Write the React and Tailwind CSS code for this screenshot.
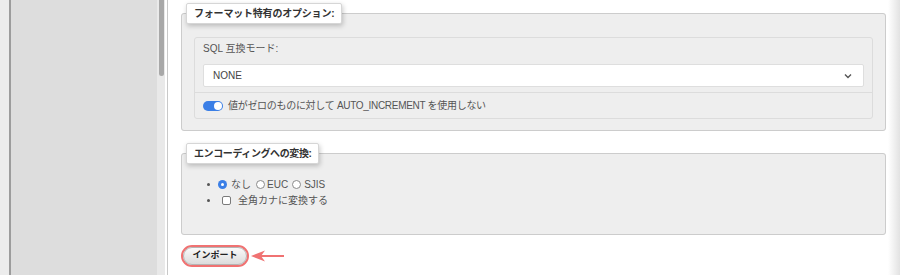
import React from "react";

const FONT = { fontFamily: "'Liberation Sans','Noto Sans CJK JP',sans-serif" };

function Radio({ checked }) {
  return checked ? (
    <span className="flex h-[9px] w-[9px] shrink-0 items-center justify-center rounded-full bg-[#3b7fe6]">
      <span className="block h-[3px] w-[3px] rounded-full bg-white" />
    </span>
  ) : (
    <span className="block h-[9px] w-[9px] shrink-0 rounded-full border border-[#8a8a8a] bg-white" />
  );
}

function Bullet() {
  return <span className="block h-[3px] w-[3px] shrink-0 rounded-full bg-[#555]" />;
}

export default function App() {
  return (
    <div
      className="flex h-[275px] w-[900px] overflow-hidden bg-white text-[10px] text-[#555]"
      style={FONT}
    >
      {/* left sidebar */}
      <div className="w-[9px] bg-[#ececec]" />
      <div className="w-[2px] bg-[#9c9c9c]" />
      <div className="w-[146px] bg-[#dddddd]" />
      <div className="w-[8px] bg-[#e9e9e9] pl-[2px]">
        <div className="h-[76px] w-[5px] rounded-b-[3px] bg-[#a8a8a8]" />
      </div>
      <div className="w-[2px] bg-white" />
      <div className="w-[1px] bg-[#c9c9c9]" />

      {/* main */}
      <main className="flex w-[720px] flex-col pl-[13px] pt-[3px]">
        <fieldset className="w-[705px] rounded-[3px] border border-[#cccccc] bg-[#eeeeee] px-[4px] pb-[11px] pt-[13px]">
          <legend className="rounded-[2px] border border-[#d6d6d6] bg-white px-[7px] text-[10px] font-bold leading-[19px] tracking-[-0.2px] text-[#333] shadow-[1px_2px_5px_rgba(0,0,0,0.22)]">
            フォーマット特有のオプション:
          </legend>
          <div className="mx-[8px] rounded-[3px] border border-[#dcdcdc] bg-[#eeeeee]">
            <div className="border-b border-[#dcdcdc] px-[8px] pb-[5px] pt-[3px]">
              <div className="mb-[7px] h-[16px] leading-[16px]">SQL 互換モード:</div>
              <div className="flex h-[23px] items-center justify-between rounded-[2px] border border-[#dedede] bg-white pl-[9px] pr-[11px] text-[#444]">
                <span>NONE</span>
                <svg width="8" height="6" viewBox="0 0 8 6">
                  <polyline
                    points="1,1.5 4,4.5 7,1.5"
                    fill="none"
                    stroke="#555"
                    strokeWidth="1.4"
                  />
                </svg>
              </div>
            </div>
            <div className="flex h-[25px] items-center gap-[5px] px-[8px]">
              <span className="flex h-[10px] w-[20px] items-center justify-end rounded-full bg-[#3b7fe6] pr-[1px]">
                <span className="block h-[8px] w-[8px] rounded-full bg-white" />
              </span>
              <span className="tracking-[-0.3px]">値がゼロのものに対して AUTO_INCREMENT を使用しない</span>
            </div>
          </div>
        </fieldset>

        <fieldset className="mt-[12px] w-[705px] rounded-[3px] border border-[#cccccc] bg-[#eeeeee] px-[4px] pb-[26px] pt-[12px]">
          <legend className="rounded-[2px] border border-[#d6d6d6] bg-white px-[7px] text-[10px] font-bold leading-[19px] tracking-[-0.4px] text-[#333] shadow-[1px_2px_5px_rgba(0,0,0,0.22)]">
            エンコーディングへの変換:
          </legend>
          <div className="flex flex-col pl-[21px]">
            <div className="flex h-[16px] items-center">
              <Bullet />
              <span className="ml-[8px] flex">
                <Radio checked />
              </span>
              <span className="ml-[4px]">なし</span>
              <span className="ml-[5px] flex">
                <Radio />
              </span>
              <span className="ml-[2px]">EUC</span>
              <span className="ml-[4px] flex">
                <Radio />
              </span>
              <span className="ml-[3px]">SJIS</span>
            </div>
            <div className="flex h-[16px] items-center">
              <Bullet />
              <span className="ml-[12px] block h-[9px] w-[9px] shrink-0 rounded-[2px] border border-[#7a7a7a] bg-white" />
              <span className="ml-[7px]">全角カナに変換する</span>
            </div>
          </div>
        </fieldset>

        <div className="mt-[10px] flex items-center">
          <div className="flex h-[22px] w-[68px] rounded-full border-[2px] border-[#f07272]">
            <button className="flex flex-1 items-center justify-center rounded-full border border-[#b5b5b5] bg-gradient-to-b from-[#fafafa] to-[#dcdcdc] text-[9px] font-bold text-[#222]">
              インポート
            </button>
          </div>
          <svg className="ml-[2px]" width="34" height="12" viewBox="0 0 34 12">
            <path d="M0 6 L14 0.5 L10 6 L14 11.5 Z" fill="#f07272" />
            <line x1="10" y1="6" x2="33" y2="6" stroke="#f07272" strokeWidth="2" />
          </svg>
        </div>
      </main>

      {/* right edge shadow */}
      <div className="w-[12px] bg-gradient-to-r from-white to-[#e2e2e2]" />
    </div>
  );
}
